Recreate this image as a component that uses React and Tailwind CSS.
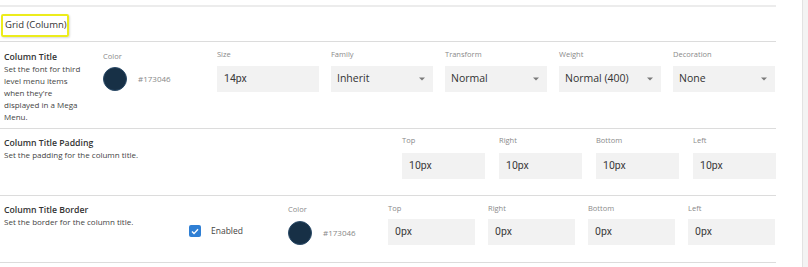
import React from "react";

const label = "block h-[10px] leading-[10px] text-[7.5px] text-[#8a8a8a]";
const sans = { fontFamily: '"Open Sans", "Noto Sans", sans-serif' };
const roboto = { fontFamily: 'Roboto, "Open Sans", sans-serif' };

function TextField({ name, value, w, gap }) {
  return (
    <div className={w}>
      <span className={label} style={sans}>{name}</span>
      <div
        className={`${gap} h-[26px] bg-[#f2f2f2] pl-[7px] flex items-center text-[10.5px] text-[#3a3a3a]`}
        style={roboto}
      >
        {value}
      </div>
    </div>
  );
}

function SelectField({ name, value }) {
  return (
    <div className="w-[102px]">
      <span className={label} style={sans}>{name}</span>
      <div className="mt-[7px] h-[26px] bg-[#f2f2f2] pl-[6px] pr-[6px] flex items-center justify-between text-[10.5px] text-[#333]">
        <span>{value}</span>
        <svg width="6" height="4" viewBox="0 0 6 4" className="mr-[2px]">
          <path d="M0 0.5h6L3 3.5z" fill="#7a7a7a" />
        </svg>
      </div>
    </div>
  );
}

function Swatch({ top }) {
  return (
    <div className={`${top} flex items-center`}>
      <div className="w-[24px] h-[24px] rounded-full bg-[#173046] border border-[#2a4a68]" />
      <span className="ml-[11px] text-[8px] text-[#888]">#173046</span>
    </div>
  );
}

export default function App() {
  return (
    <div className="w-[808px] h-[267px] bg-white flex overflow-hidden text-[#333]" style={sans}>
      <div className="w-[776px]">
        <div className="h-[2px] bg-[#ececec] mt-[5px]" />

        {/* heading */}
        <div className="pt-[7px] pb-[4px] border-b border-[#dcdcdc]">
          <div className="ml-[1px] w-[68px] h-[23px] border-2 border-[#ecec1c] rounded-[2px] shadow-[1px_1px_2px_rgba(0,0,0,0.15)] flex items-center pl-[2px] text-[9.5px] text-[#333]">
            Grid (Column)
          </div>
        </div>

        {/* column title */}
        <div className="h-[87px] border-b border-[#dcdcdc] flex">
          <div className="w-[103px] pl-[4px] pr-[19px] pt-[9px]">
            <div className="text-[8.7px] leading-[12px] font-semibold text-[#333]">Column Title</div>
            <div className="text-[8px] leading-[12px] text-[#444]">
              Set the font for third level menu items when they're displayed in a Mega Menu.
            </div>
          </div>
          <div className="w-[114px] pt-[9px]">
            <span className={label}>Color</span>
            <Swatch top="mt-[6px]" />
          </div>
          <div className="flex gap-[12px] pt-[7px]">
            <TextField name="Size" value="14px" w="w-[102px]" gap="mt-[7px]" />
            <SelectField name="Family" value="Inherit" />
            <SelectField name="Transform" value="Normal" />
            <SelectField name="Weight" value="Normal (400)" />
            <SelectField name="Decoration" value="None" />
          </div>
        </div>

        {/* padding */}
        <div className="h-[67px] border-b border-[#dcdcdc] flex">
          <div className="w-[402px] pl-[4px] pt-[8px]">
            <div className="text-[8.7px] leading-[12px] font-semibold text-[#333]">Column Title Padding</div>
            <div className="text-[8px] leading-[12px] text-[#444]">Set the padding for the column title.</div>
          </div>
          <div className="flex gap-[14px] pt-[6px]">
            <TextField name="Top" value="10px" w="w-[83px]" gap="mt-[8px]" />
            <TextField name="Right" value="10px" w="w-[83px]" gap="mt-[8px]" />
            <TextField name="Bottom" value="10px" w="w-[83px]" gap="mt-[8px]" />
            <TextField name="Left" value="10px" w="w-[83px]" gap="mt-[8px]" />
          </div>
        </div>

        {/* border */}
        <div className="h-[67px] border-b border-[#dcdcdc] flex">
          <div className="w-[189px] pl-[4px] pt-[8px]">
            <div className="text-[8.7px] leading-[12px] font-semibold text-[#333]">Column Title Border</div>
            <div className="text-[8px] leading-[12px] text-[#444]">Set the border for the column title.</div>
          </div>
          <div className="w-[99px] pt-[29px] flex items-start">
            <div className="w-[12px] h-[12px] rounded-[2px] bg-[#2f7fd4] flex items-center justify-center">
              <svg width="8" height="7" viewBox="0 0 8 7">
                <path d="M1 3.6l2 2L7 1.2" stroke="#fff" strokeWidth="1.4" fill="none" />
              </svg>
            </div>
            <span className="ml-[10px] text-[8.5px] leading-[12px] text-[#444]">Enabled</span>
          </div>
          <div className="w-[100px] pt-[8px]">
            <span className={label}>Color</span>
            <Swatch top="mt-[7px]" />
          </div>
          <div className="flex gap-[13px] pt-[7px]">
            <TextField name="Top" value="0px" w="w-[87px]" gap="mt-[6px]" />
            <TextField name="Right" value="0px" w="w-[87px]" gap="mt-[6px]" />
            <TextField name="Bottom" value="0px" w="w-[87px]" gap="mt-[6px]" />
            <TextField name="Left" value="0px" w="w-[87px]" gap="mt-[6px]" />
          </div>
        </div>
      </div>
      <div className="w-[26px]" />
      <div className="w-[6px] h-full bg-[#f3f3f3] border-l border-[#e2e2e2]" />
    </div>
  );
}
